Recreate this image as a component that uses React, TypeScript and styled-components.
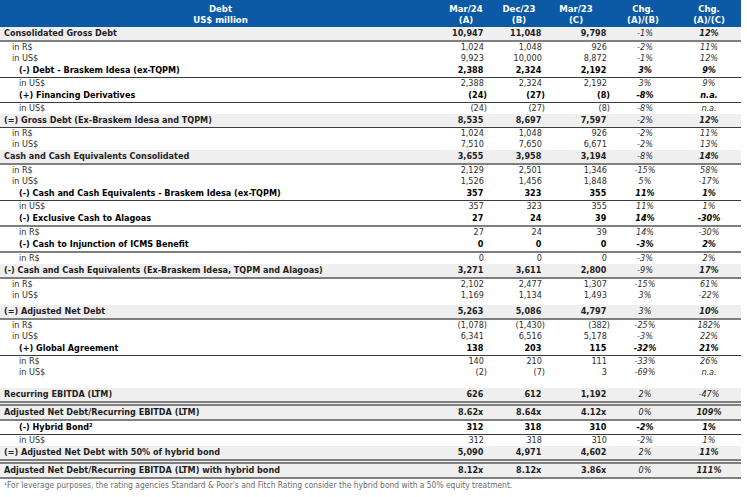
import React from 'react';
import styled, { createGlobalStyle } from 'styled-components';

const GlobalStyle = createGlobalStyle`
  html, body {
    margin: 0;
    padding: 0;
    background: #ffffff;
  }
  body {
    font-family: "DejaVu Sans", Tahoma, Verdana, sans-serif;
    font-stretch: condensed;
    -webkit-font-smoothing: antialiased;
  }
`;

const COLS = '441px 50px 56px 66px 64px 64px';

type Kind = 'total' | 'sub' | 'plain';
type Rule = 'none' | 'thin' | 'thick' | 'double';

interface Line {
  label: string;
  level: 0 | 1 | 2;
  kind: Kind;
  vals: string[];
  rule?: Rule;
  gap?: number;
  flatChg?: boolean;
}

const rules: Record<Rule, string> = {
  none: 'none',
  thin: '1px solid #3c3c3c',
  thick: '2px solid #7f7f7f',
  double: '5px double #7f7f7f',
};

const Sheet = styled.div`
  width: 741px;
`;

const Head = styled.div`
  display: grid;
  grid-template-columns: ${COLS};
  align-items: center;
  height: 27px;
  background: #0c5aa6;
  color: #ffffff;
  font-size: 9.5px;
  font-weight: 700;
  line-height: 11px;
`;

const HeadCell = styled.div<{ $nudge?: number }>`
  text-align: center;
  padding-right: ${({ $nudge }) => $nudge ?? 0}px;
`;

const Row = styled.div<{ $kind: Kind; $rule: Rule; $gap: number }>`
  display: grid;
  grid-template-columns: ${COLS};
  align-items: center;
  height: ${({ $kind }) => ($kind === 'plain' ? 11 : 13)}px;
  margin-top: ${({ $gap }) => $gap}px;
  background: ${({ $kind }) => ($kind === 'total' ? '#efefef' : '#ffffff')};
  border-bottom: ${({ $rule }) => rules[$rule]};
  font-size: 9px;
  line-height: 11px;
  white-space: nowrap;
  color: ${({ $kind }) => ($kind === 'plain' ? '#2e2e2e' : $kind === 'sub' ? '#000000' : '#1e1e1e')};
  font-weight: ${({ $kind }) => ($kind === 'plain' ? 400 : $kind === 'sub' ? 700 : 600)};
`;

const Label = styled.div<{ $level: number }>`
  padding-left: ${({ $level }) => [4, 12, 19][$level]}px;
`;

const Num = styled.div<{ $pad: number }>`
  text-align: right;
  padding-right: ${({ $pad }) => $pad}px;
`;

const Ghost = styled.span`
  visibility: hidden;
`;

const Chg = styled.div<{ $bold: boolean }>`
  text-align: center;
  font-style: italic;
  font-weight: ${({ $bold }) => ($bold ? 700 : 400)};
`;

const Note = styled.div`
  padding: 1px 0 0 4px;
  font-size: 8.4px;
  line-height: 10px;
  color: #6a6a6a;
  white-space: nowrap;
`;

const lines: Line[] = [
  { label: 'Consolidated Gross Debt', level: 0, kind: 'total', vals: ['10,947', '11,048', '9,798', '-1%', '12%'], rule: 'thick' },
  { label: 'in R$', level: 1, kind: 'plain', vals: ['1,024', '1,048', '926', '-2%', '11%'] },
  { label: 'in US$', level: 1, kind: 'plain', vals: ['9,923', '10,000', '8,872', '-1%', '12%'] },
  { label: '(-) Debt - Braskem Idesa (ex-TQPM)', level: 2, kind: 'sub', vals: ['2,388', '2,324', '2,192', '3%', '9%'], rule: 'thin' },
  { label: 'in US$', level: 2, kind: 'plain', vals: ['2,388', '2,324', '2,192', '3%', '9%'] },
  { label: '(+) Financing Derivatives', level: 2, kind: 'sub', vals: ['(24)', '(27)', '(8)', '-8%', 'n.a.'], rule: 'thin' },
  { label: 'in US$', level: 2, kind: 'plain', vals: ['(24)', '(27)', '(8)', '-8%', 'n.a.'] },
  { label: '(=) Gross Debt (Ex-Braskem Idesa and TQPM)', level: 0, kind: 'total', vals: ['8,535', '8,697', '7,597', '-2%', '12%'], rule: 'thin' },
  { label: 'in R$', level: 1, kind: 'plain', vals: ['1,024', '1,048', '926', '-2%', '11%'] },
  { label: 'in US$', level: 1, kind: 'plain', vals: ['7,510', '7,650', '6,671', '-2%', '13%'] },
  { label: 'Cash and Cash Equivalents Consolidated', level: 0, kind: 'total', vals: ['3,655', '3,958', '3,194', '-8%', '14%'], rule: 'thick' },
  { label: 'in R$', level: 1, kind: 'plain', vals: ['2,129', '2,501', '1,346', '-15%', '58%'] },
  { label: 'in US$', level: 1, kind: 'plain', vals: ['1,526', '1,456', '1,848', '5%', '-17%'] },
  { label: '(-) Cash and Cash Equivalents - Braskem Idesa (ex-TQPM)', level: 2, kind: 'sub', vals: ['357', '323', '355', '11%', '1%'], rule: 'thin' },
  { label: 'in US$', level: 2, kind: 'plain', vals: ['357', '323', '355', '11%', '1%'] },
  { label: '(-) Exclusive Cash to Alagoas', level: 2, kind: 'sub', vals: ['27', '24', '39', '14%', '-30%'], rule: 'thick' },
  { label: 'in R$', level: 2, kind: 'plain', vals: ['27', '24', '39', '14%', '-30%'] },
  { label: '(-) Cash to Injunction of ICMS Benefit', level: 2, kind: 'sub', vals: ['0', '0', '0', '-3%', '2%'], rule: 'thick' },
  { label: 'in R$', level: 2, kind: 'plain', vals: ['0', '0', '0', '-3%', '2%'] },
  { label: '(-) Cash and Cash Equivalents (Ex-Braskem Idesa, TQPM and Alagoas)', level: 0, kind: 'total', vals: ['3,271', '3,611', '2,800', '-9%', '17%'], rule: 'thick' },
  { label: 'in R$', level: 1, kind: 'plain', vals: ['2,102', '2,477', '1,307', '-15%', '61%'] },
  { label: 'in US$', level: 1, kind: 'plain', vals: ['1,169', '1,134', '1,493', '3%', '-22%'] },
  { label: '(=) Adjusted Net Debt', level: 0, kind: 'total', vals: ['5,263', '5,086', '4,797', '3%', '10%'], rule: 'thick', gap: 4 },
  { label: 'in R$', level: 1, kind: 'plain', vals: ['(1,078)', '(1,430)', '(382)', '-25%', '182%'] },
  { label: 'in US$', level: 1, kind: 'plain', vals: ['6,341', '6,516', '5,178', '-3%', '22%'] },
  { label: '(+) Global Agreement', level: 2, kind: 'sub', vals: ['138', '203', '115', '-32%', '21%'], rule: 'thin' },
  { label: 'in R$', level: 2, kind: 'plain', vals: ['140', '210', '111', '-33%', '26%'] },
  { label: 'in US$', level: 2, kind: 'plain', vals: ['(2)', '(7)', '3', '-69%', 'n.a.'] },
  { label: 'Recurring EBITDA (LTM)', level: 0, kind: 'total', vals: ['626', '612', '1,192', '2%', '-47%'], rule: 'double', gap: 10, flatChg: true },
  { label: 'Adjusted Net Debt/Recurring EBITDA (LTM)', level: 0, kind: 'total', vals: ['8.62x', '8.64x', '4.12x', '0%', '109%'], rule: 'thick' },
  { label: '(-) Hybrid Bond²', level: 2, kind: 'sub', vals: ['312', '318', '310', '-2%', '1%'], rule: 'thin' },
  { label: 'in US$', level: 2, kind: 'plain', vals: ['312', '318', '310', '-2%', '1%'] },
  { label: '(=) Adjusted Net Debt with 50% of hybrid bond', level: 0, kind: 'total', vals: ['5,090', '4,971', '4,602', '2%', '11%'], rule: 'double' },
  { label: 'Adjusted Net Debt/Recurring EBITDA (LTM) with hybrid bond', level: 0, kind: 'total', vals: ['8.12x', '8.12x', '3.86x', '0%', '111%'], rule: 'thick' },
];

const numPads = [4, 2, 3];

const Amount = ({ value, pad }: { value: string; pad: number }) => (
  <Num $pad={pad}>
    {value}
    {!value.endsWith(')') && <Ghost>)</Ghost>}
  </Num>
);

const App = () => (
  <>
    <GlobalStyle />
    <Sheet>
      <Head>
        <HeadCell>
          Debt
          <br />
          US$ million
        </HeadCell>
        <HeadCell>
          Mar/24
          <br />
          (A)
        </HeadCell>
        <HeadCell>
          Dec/23
          <br />
          (B)
        </HeadCell>
        <HeadCell $nudge={8}>
          Mar/23
          <br />
          (C)
        </HeadCell>
        <HeadCell $nudge={4}>
          Chg.
          <br />
          (A)/(B)
        </HeadCell>
        <HeadCell>
          Chg.
          <br />
          (A)/(C)
        </HeadCell>
      </Head>
      {lines.map((line, i) => (
        <Row key={i} $kind={line.kind} $rule={line.rule ?? 'none'} $gap={line.gap ?? 0}>
          <Label $level={line.level}>{line.label}</Label>
          {line.vals.slice(0, 3).map((v, j) => (
            <Amount key={j} value={v} pad={numPads[j]} />
          ))}
          <Chg $bold={line.kind === 'sub'}>{line.vals[3]}</Chg>
          <Chg $bold={line.kind === 'sub' || (line.kind === 'total' && !line.flatChg)}>{line.vals[4]}</Chg>
        </Row>
      ))}
      <Note>
        ¹For leverage purposes, the rating agencies Standard &amp; Poor's and Fitch Rating consider the hybrid bond with a
        50% equity treatment.
      </Note>
    </Sheet>
  </>
);

export default App;
